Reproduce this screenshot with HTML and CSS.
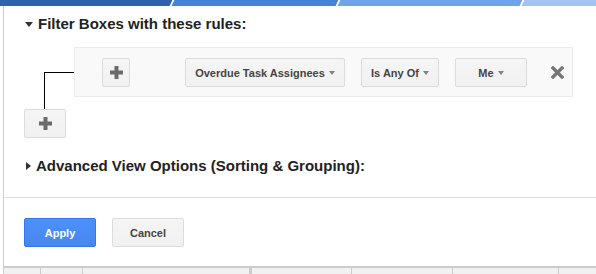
FILE: index.html
```html
<!DOCTYPE html>
<html lang="en">
<head>
    <meta charset="UTF-8">
    <meta name="viewport" content="width=device-width, initial-scale=1.0">
    <title>Filter Boxes</title>
    <link rel="stylesheet" href="styles.css">
</head>
<body>
    <div class="topbar">
        <div class="seg seg-1"></div>
        <div class="seg seg-2"></div>
        <div class="seg seg-3"></div>
        <div class="seg seg-4"></div>
    </div>

    <div class="panel">
        <div class="section-title open">
            <span class="caret-down"></span>
            <span>Filter Boxes with these rules:</span>
        </div>

        <div class="rules">
            <div class="rule-row">
                <div class="connector"></div>
                <div class="rule">
                    <button class="btn btn-icon btn-sub">
                        <svg width="13" height="13" viewBox="0 0 13 13"><rect x="4.5" y="0" width="4" height="13" fill="#6b6b6b"/><rect x="0" y="4.5" width="13" height="4" fill="#6b6b6b"/></svg>
                    </button>
                    <button class="btn btn-drop field">Overdue Task Assignees<span class="arrow"></span></button>
                    <button class="btn btn-drop op">Is Any Of<span class="arrow"></span></button>
                    <button class="btn btn-drop value">Me<span class="arrow"></span></button>
                    <span class="remove">
                        <svg width="13" height="13" viewBox="0 0 13 13"><path d="M2 2 L11 11 M11 2 L2 11" stroke="#777" stroke-width="3.4" stroke-linecap="square"/></svg>
                    </span>
                </div>
            </div>
            <div class="add-wrap">
                <div class="stub"></div>
                <button class="btn btn-icon btn-add">
                    <svg width="13" height="13" viewBox="0 0 13 13"><rect x="4.5" y="0" width="4" height="13" fill="#6b6b6b"/><rect x="0" y="4.5" width="13" height="4" fill="#6b6b6b"/></svg>
                </button>
            </div>
        </div>

        <div class="section-title closed">
            <span class="caret-right"></span>
            <span>Advanced View Options (Sorting &amp; Grouping):</span>
        </div>

        <div class="actions">
            <button class="btn btn-primary">Apply</button>
            <button class="btn">Cancel</button>
        </div>

        <div class="table-head">
            <div class="cell" style="width: 36px"></div>
            <div class="cell" style="width: 41px"></div>
            <div class="cell cell-wide" style="width: 166px"></div>
            <div class="cell" style="width: 99px"></div>
            <div class="cell" style="width: 100px"></div>
            <div class="cell" style="width: 105px"></div>
            <div class="cell" style="width: 40px"></div>
        </div>
    </div>
</body>
</html>
```

FILE: styles.css
```css
body {
    margin: 0;
    font-family: "Liberation Sans", Arial, sans-serif;
    color: #222;
    background: #fff;
    overflow: hidden;
}

/* top colour strip */
.topbar {
    display: flex;
    gap: 2px;
    height: 6px;
    overflow: hidden;
}

.seg {
    height: 6px;
    flex-shrink: 0;
    transform: skewX(-25deg);
}

.seg-1 {
    width: 174px;
    margin-left: -3px;
    background: #2f62ad;
}

.seg-2 {
    width: 164px;
    background: #4583d7;
}

.seg-3 {
    width: 182px;
    background: #70a3e7;
}

.seg-4 {
    width: 300px;
    background: #a5c3f1;
}

.panel {
    margin-left: 3px;
    border-left: 1px solid #cfcfcf;
    height: 268px;
}

.section-title {
    display: flex;
    align-items: center;
    font-size: 15px;
    font-weight: bold;
    line-height: 18px;
    color: #222;
}

.section-title.open {
    padding: 9px 0 0 21px;
}

.section-title.closed {
    padding-left: 22px;
    margin-top: 19px;
}

.caret-down {
    width: 0;
    height: 0;
    border-left: 4px solid transparent;
    border-right: 4px solid transparent;
    border-top: 5px solid #333;
    margin-right: 5px;
}

.caret-right {
    width: 0;
    height: 0;
    border-top: 4px solid transparent;
    border-bottom: 4px solid transparent;
    border-left: 5px solid #333;
    margin-right: 5px;
}

/* rule builder */
.rules {
    margin-top: 14px;
    padding-left: 20px;
}

.rule-row {
    display: flex;
    margin-left: 20px;
    margin-right: 23px;
}

.connector {
    flex-shrink: 0;
    width: 30px;
    height: 25px;
    align-self: flex-end;
    box-sizing: border-box;
    border-top: 1px solid #000;
    border-left: 1px solid #000;
}

.rule {
    flex: 1;
    display: flex;
    align-items: center;
    padding: 10px 0 9px 27px;
    background: #f9f9f9;
    border: 1px solid #ebebeb;
}

.btn {
    flex-shrink: 0;
    height: 29px;
    padding: 0 10px;
    box-sizing: border-box;
    font-family: "Liberation Sans", Arial, sans-serif;
    font-size: 11px;
    font-weight: bold;
    color: #444;
    white-space: nowrap;
    background: linear-gradient(#f5f5f5, #f1f1f1);
    border: 1px solid #dcdcdc;
    border-radius: 2px;
    display: inline-flex;
    align-items: center;
    justify-content: center;
    min-width: 72px;
}

.btn-icon {
    padding: 0;
    min-width: 0;
}

.btn-sub {
    width: 28px;
    margin-right: 55px;
}

.btn-add {
    width: 42px;
}

.btn-drop {
    margin-right: 16px;
}

.field {
    width: 160px;
}

.op {
    width: 78px;
}

.arrow {
    width: 0;
    height: 0;
    margin-left: 4px;
    border-left: 3.5px solid transparent;
    border-right: 3.5px solid transparent;
    border-top: 4px solid #808080;
}

.value {
    margin-right: 24px;
}

.remove {
    display: flex;
}

.add-wrap {
    display: flex;
    flex-direction: column;
    width: 42px;
}

.stub {
    width: 1px;
    height: 12px;
    margin-left: 20px;
    background: #000;
}

/* footer buttons */
.actions {
    display: flex;
    gap: 16px;
    margin-top: 22px;
    padding: 20px 0 19px 20px;
    border-top: 1px solid #dcdcdc;
}

.btn-primary {
    color: #fff;
    background: linear-gradient(#4d90fe, #4787ed);
    border-color: #3079ed;
}

.table-head {
    display: flex;
    border-top: 2px solid #cccccc;
    height: 6px;
}

.cell {
    flex-shrink: 0;
    background: #f1f1f1;
    border-right: 1px solid #cccccc;
}

.cell-wide {
    border-right: 3px solid #cccccc;
}
```
